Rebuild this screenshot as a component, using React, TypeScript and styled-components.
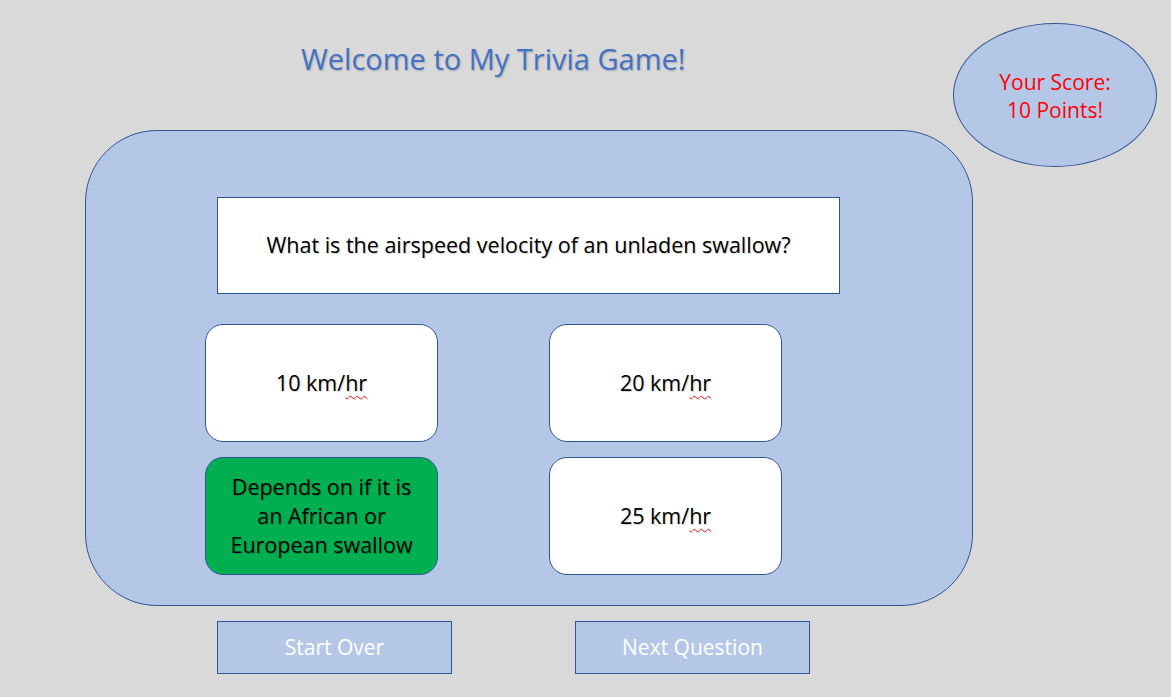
import React from "react";
import styled, { createGlobalStyle } from "styled-components";

const Global = createGlobalStyle`
  html, body { margin: 0; padding: 0; background: #d9d9d9; }
  body { font-family: "Open Sans", Lato, sans-serif; }
`;

const Stage = styled.div`
  position: relative;
  width: 1171px;
  height: 697px;
  overflow: hidden;
  background: #d9d9d9;
  display: flex;
  flex-direction: column;
  padding: 40px 0 0 85px;
  box-sizing: border-box;
`;

const Title = styled.h1`
  margin: 0 0 0 216px;
  height: 40px;
  line-height: 38px;
  font-family: "Open Sans", sans-serif;
  font-weight: 400;
  font-size: 29px;
  color: #4472c4;
  text-shadow: 1px 1px 2px rgba(0, 0, 0, 0.2);
  white-space: nowrap;
`;

const ScoreBadge = styled.div`
  position: absolute;
  left: 953px;
  top: 23px;
  width: 204px;
  height: 144px;
  box-sizing: border-box;
  border-radius: 50%;
  border: 1px solid #2f5597;
  background: #b4c7e7;
  display: flex;
  align-items: center;
  justify-content: center;
  text-align: center;
  color: #ff0000;
  font-family: "Open Sans", sans-serif;
  font-size: 21px;
  line-height: 28px;
  padding-top: 1px;
`;

const Panel = styled.section`
  margin-top: 50px;
  width: 888px;
  height: 476px;
  box-sizing: border-box;
  border: 1px solid #2f5597;
  border-radius: 72px;
  background: #b4c7e7;
  padding: 66px 0 0 119px;
  display: flex;
  flex-direction: column;
`;

const Question = styled.div`
  margin-left: 12px;
  width: 623px;
  height: 97px;
  box-sizing: border-box;
  border: 1px solid #2f5597;
  background: #ffffff;
  display: flex;
  align-items: center;
  justify-content: center;
  font-family: "Open Sans", sans-serif;
  font-size: 21.5px;
  padding-bottom: 2px;
  color: #000;
  text-shadow: 1px 1px 1px rgba(0, 0, 0, 0.18);
  white-space: nowrap;
`;

const AnswerGrid = styled.div`
  margin-top: 30px;
  display: grid;
  grid-template-columns: 233px 233px;
  grid-auto-rows: 118px;
  column-gap: 111px;
  row-gap: 15px;
`;

const Answer = styled.div<{ $correct?: boolean }>`
  box-sizing: border-box;
  border: 1px solid #2f5597;
  border-radius: 18px;
  background: ${(p) => (p.$correct ? "#00b050" : "#ffffff")};
  display: flex;
  align-items: center;
  justify-content: center;
  text-align: center;
  padding: 0 4px 2px;
  font-family: "Open Sans", sans-serif;
  font-size: 21.5px;
  line-height: 29px;
  color: #000;
  text-shadow: 1px 1px 1px rgba(0, 0, 0, 0.18);
  white-space: nowrap;
`;

const Misspelled = styled.span`
  text-decoration: underline wavy #e02020;
  text-decoration-thickness: 1px;
  text-underline-offset: 4px;
  text-decoration-skip-ink: none;
`;

const ButtonRow = styled.div`
  margin: 15px 0 0 132px;
  display: flex;
  gap: 123px;
`;

const ActionButton = styled.button`
  width: 235px;
  height: 53px;
  box-sizing: border-box;
  border: 1px solid #2f5597;
  border-radius: 0;
  background: #b4c7e7;
  color: #ffffff;
  font-family: "Open Sans", sans-serif;
  font-size: 21px;
  padding: 0 0 2px;
  cursor: pointer;
`;

export default function App() {
  return (
    <>
      <Global />
      <Stage>
        <Title>Welcome to My Trivia Game!</Title>
        <ScoreBadge>
          Your Score:
          <br />
          10 Points!
        </ScoreBadge>
        <Panel>
          <Question>What is the airspeed velocity of an unladen swallow?</Question>
          <AnswerGrid>
            <Answer>
              <span>
                10 km/<Misspelled>hr</Misspelled>
              </span>
            </Answer>
            <Answer>
              <span>
                20 km/<Misspelled>hr</Misspelled>
              </span>
            </Answer>
            <Answer $correct>
              <span>
                Depends on if it is
                <br />
                an African or
                <br />
                European swallow
              </span>
            </Answer>
            <Answer>
              <span>
                25 km/<Misspelled>hr</Misspelled>
              </span>
            </Answer>
          </AnswerGrid>
        </Panel>
        <ButtonRow>
          <ActionButton>Start Over</ActionButton>
          <ActionButton>Next Question</ActionButton>
        </ButtonRow>
      </Stage>
    </>
  );
}
